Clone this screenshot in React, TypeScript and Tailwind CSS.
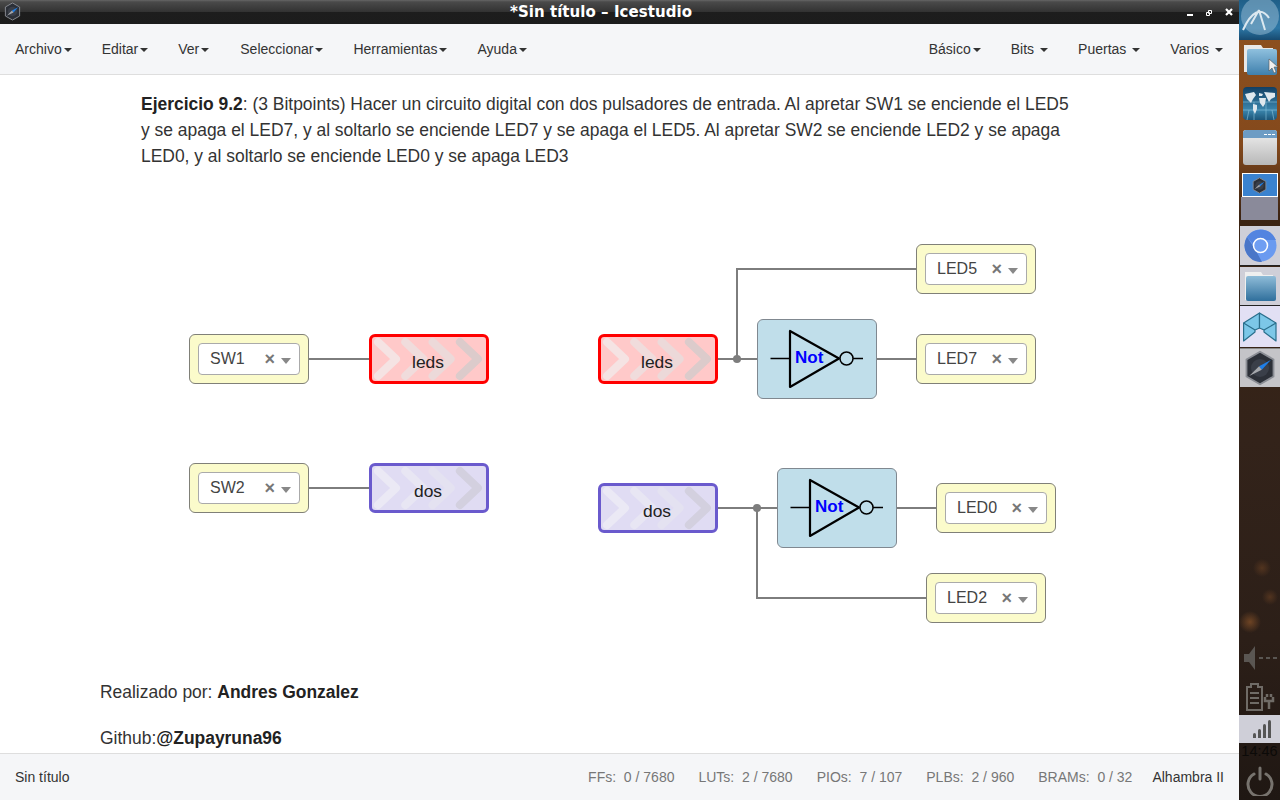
const menuLeft = [
  { label: "Archivo", cls: "ml-[15px]" },
  { label: "Editar", cls: "ml-[30px]" },
  { label: "Ver", cls: "ml-[30px]" },
  { label: "Seleccionar", cls: "ml-[31px]" },
  { label: "Herramientas", cls: "ml-[30px]" },
  { label: "Ayuda", cls: "ml-[30px]" },
];

const stats = [
  { label: "FFs:", value: "0 / 7680" },
  { label: "LUTs:", value: "2 / 7680" },
  { label: "PIOs:", value: "7 / 107" },
  { label: "PLBs:", value: "2 / 960" },
  { label: "BRAMs:", value: "0 / 32" },
];

const Caret = ({ className = "ml-[2px]" }: { className?: string }) => (
  <span className={`inline-block w-0 h-0 border-x-[4px] border-x-transparent border-t-[4px] border-t-[#333] align-middle ${className}`} />
);

const IceLogo = ({ size }: { size: number }) => (
  <svg width={size} height={size} viewBox="0 0 40 40">
    <path d="M20 2 35 10.500 35 29.500 20 38 5 29.500 5 10.500Z" fill="#2c3038" stroke="#8a8d94" strokeWidth="2" />
    <circle cx="20" cy="20" r="10" fill="#3a3f49" />
    <path d="M32 11 19 18 22 22Z" fill="#1f7fe8" />
    <path d="M8 29 19 18 22 22Z" fill="#a5a8ad" />
  </svg>
);

const PinBlock = ({ name, className }: { name: string; className: string }) => (
  <div className={`absolute w-[120px] h-[50px] flex items-center justify-center bg-[#fbfbcb] border border-[#808078] rounded-[6px] ${className}`}>
    <div className="w-[102px] h-[32px] flex items-center bg-white border border-[#aaa] rounded-[4px] pl-[11px] text-[16px] text-[#444]">
      <span className="flex-1">{name}</span>
      <span className="text-[18px] leading-none font-bold text-[#777] mr-[6px]">×</span>
      <span className="w-0 h-0 mr-[8px] mt-[3px] border-x-[5px] border-x-transparent border-t-[6px] border-t-[#888]" />
    </div>
  </div>
);

const TagBlock = ({ name, kind, className }: { name: string; kind: "red" | "purple"; className: string }) => {
  const red = kind === "red";
  const chevrons = red
    ? ["#f5e3e3", "#f0dcdc", "#ecd9d9", "#dccbcb"]
    : ["#ebe9f5", "#e8e6f3", "#e4e2f1", "#d3d0df"];
  return (
    <div className={`absolute w-[120px] h-[50px] rounded-[6px] border-[3px] overflow-hidden ${red ? "bg-[#ffc9c9] border-[#ff0000]" : "bg-[#e0dcf3] border-[#6a5acd]"} ${className}`}>
      <svg className="absolute -left-[3px] -top-[3px]" width="120" height="50" viewBox="0 0 120 50" fill="none">
        {chevrons.map((c, i) => (
          <path key={i} d={`M${9 + i * 27.300} 8 L${27 + i * 27.300} 25 L${9 + i * 27.300} 42`} stroke={c} strokeWidth="8" strokeLinecap="round" strokeLinejoin="round" />
        ))}
      </svg>
      <div className="relative h-full flex items-center justify-center pt-[7px] pr-[2px] text-[17.400px] text-[#222]">{name}</div>
    </div>
  );
};

const NotBlock = ({ className }: { className: string }) => (
  <div className={`absolute w-[120px] h-[80px] bg-[#c0deea] border border-[#808890] rounded-[6px] ${className}`}>
    <svg className="absolute left-0 top-0" width="118" height="78" viewBox="0 0 118 78" fill="none">
      <path d="M12.500 38.500H32M95 38.500H105" stroke="#000" strokeWidth="1.500" />
      <path d="M32 11V67L81 38.500Z" stroke="#000" strokeWidth="2.200" strokeLinejoin="round" />
      <circle cx="88.500" cy="38.500" r="6.500" stroke="#000" strokeWidth="1.500" fill="#c0deea" />
    </svg>
    <span className="absolute left-[37px] top-[28px] text-[17px] leading-[20px] font-bold text-[#0000ff] font-['Liberation_Sans',sans-serif]">Not</span>
  </div>
);

const Wires = () => (
  <svg className="absolute left-0 top-0" width="1239" height="680" fill="none">
    <g stroke="#7d7d7d" strokeWidth="2" transform="translate(0,-75)">
      <path d="M308 359H370M308 488H370" />
      <path d="M717 359H758M737 359V269H917M877 359H917" />
      <path d="M717 508H778M757 508V598H927M897 508H937" />
    </g>
    <g fill="#7d7d7d" transform="translate(0,-75)">
      <circle cx="737" cy="359" r="4" />
      <circle cx="757" cy="508" r="4" />
    </g>
  </svg>
);

const Dock = () => (
  <aside className="w-[41px] h-full flex flex-col items-center bg-[radial-gradient(circle_at_11px_622px,#6e4424_0,transparent_11px),radial-gradient(circle_at_23px_568px,#52341f_0,transparent_9px),radial-gradient(circle_at_31px_597px,#52341f_0,transparent_8px),linear-gradient(180deg,#8f5220_0%,#84491c_18%,#3c2413_27%,#33231a_55%,#2c1f18_80%,#1f1713_100%)] overflow-hidden">
    <div className="w-full h-[40px] bg-[linear-gradient(180deg,#1f5f88,#2d77a6_70%,#174a70)] flex justify-center">
      <svg width="41" height="40" viewBox="0 0 41 40" fill="none">
        <circle cx="21" cy="16" r="19" fill="#8fb6cf" opacity="0.55" />
        <path d="M4 30C12 12 22 6 30 18M20 10 26 30M20 10 12 24" stroke="#dbe8f0" strokeWidth="2" />
      </svg>
    </div>
    <svg className="mt-[2px]" width="38" height="34" viewBox="0 0 38 34" fill="none">
      <defs>
        <linearGradient id="folderTop" x1="0" y1="0" x2="0" y2="1">
          <stop offset="0" stopColor="#8fc0de" />
          <stop offset="1" stopColor="#3f80ad" />
        </linearGradient>
      </defs>
      <path d="M3 3H20L22 6H32V30H3Z" fill="#e8e8e8" />
      <rect x="6" y="7" width="30" height="26" rx="2" fill="url(#folderTop)" />
      <path d="M28 17V29L31 26 33 31 35 30 33 25H37Z" fill="#f0f0f0" stroke="#555" strokeWidth="0.600" />
    </svg>
    <svg className="mt-[10px]" width="36" height="35" viewBox="0 0 36 35" fill="none">
      <defs>
        <linearGradient id="mapSea" x1="0" y1="0" x2="0" y2="1">
          <stop offset="0" stopColor="#123f63" />
          <stop offset="0.700" stopColor="#3b86ad" />
          <stop offset="1" stopColor="#1c5578" />
        </linearGradient>
      </defs>
      <rect x="1" y="1" width="34" height="33" rx="4" fill="url(#mapSea)" />
      <path d="M1 24H35M1 16H35M12 16V34M24 16V34M7 24 5 34M30 24 32 34" stroke="#8cc4dc" strokeWidth="0.600" />
      <path d="M3 8 12 6 14 9 11 13 9 17 5 13ZM11 18 15 19 15 23 13 28 11 24ZM17 7 21 8 20 10 17 10ZM17 12H24L23 18 21 21 18 17ZM22 6 33 7 33 11 29 13 27 16 24 10Z" fill="#dfe8ee" />
    </svg>
    <div className="mt-[9px] w-[34px] h-[35px] rounded-[3px] bg-[linear-gradient(180deg,#f0f0f0,#b8b8b8)] overflow-hidden">
      <div className="h-[8px] bg-[#6d9cc4] flex justify-end items-center gap-px pr-[2px]">
        <span className="w-[3px] h-px bg-white" />
        <span className="w-[3px] h-px bg-white" />
        <span className="w-[3px] h-px bg-white" />
      </div>
    </div>
    <div className="mt-[8px] w-[36px] h-[24px] bg-[#3a82cf] border border-white flex items-center justify-center">
      <IceLogo size={17} />
    </div>
    <div className="w-[37px] h-[23px] bg-[#8a8a9a]" />
    <div className="mt-[6px] w-[40px] ml-[1px] h-[40px] bg-[#cfcfd8] border-b border-[#222] flex items-center justify-center">
      <svg width="33" height="33" viewBox="0 0 33 33">
        <circle cx="16.500" cy="16.500" r="16" fill="#6a9af0" />
        <path d="M3 8 11 20 18 33 A16.500 16.500 0 0 1 3 8Z" fill="#4a76c8" />
        <path d="M32 11H16.500L9 15 3 8 A16.500 16.500 0 0 1 32 11Z" fill="#5384e0" />
        <circle cx="16.500" cy="16.500" r="7" fill="#6f9ef2" stroke="#fff" strokeWidth="1.500" />
      </svg>
    </div>
    <div className="mt-px w-[40px] ml-[1px] h-[39px] bg-[#cfcfd8] border-b border-[#222] flex items-center justify-center">
      <svg width="34" height="32" viewBox="0 0 34 32" fill="none">
        <defs>
          <linearGradient id="folderDock" x1="0" y1="0" x2="0" y2="1">
            <stop offset="0" stopColor="#8fbcd8" />
            <stop offset="1" stopColor="#2f6f9c" />
          </linearGradient>
        </defs>
        <path d="M2 2H18L20 5H30V30H2Z" fill="#efefef" />
        <rect x="3" y="6" width="30" height="25" rx="2" fill="url(#folderDock)" />
      </svg>
    </div>
    <div className="w-[40px] ml-[1px] h-[41px] bg-[#e2e0f4] flex items-center justify-center">
      <svg width="34" height="30" viewBox="0 0 34 30" fill="#7cc7e8" stroke="#2a6f8c" strokeWidth="1.200" strokeLinejoin="round">
        <path d="M16.500 1 0.600 11 0.600 29 12 20V18L16.500 16Z" />
        <path d="M16.500 1 33 11 33 29 21 20V18L16.500 16Z" />
        <path d="M0.600 11 12 18M33 11 21 18" />
      </svg>
    </div>
    <div className="mt-px w-[40px] ml-[1px] h-[39px] bg-[#c4c4c8] border-t border-[#888] flex items-center justify-center">
      <IceLogo size={36} />
    </div>
    <div className="flex-1" />
    <svg className="mb-[9px]" width="38" height="26" viewBox="0 0 38 26" fill="#5a5652">
      <path d="M3 9H8L14 1V25L8 17H3Z" />
      <path d="M18 12h4v2h-4zM25 12h4v2h-4zM32 12h4v2h-4z" />
    </svg>
    <svg className="mb-[4px]" width="32" height="31" viewBox="0 0 32 31" fill="none" stroke="#6f6b66" strokeWidth="2">
      <path d="M7 4H14V7H18V30H3V7H7Z" />
      <path d="M6 13H15M6 18H15M6 23H15" />
      <path d="M21 17V21H29V17M25 21V29M23 14V17M27 14V17" strokeWidth="2.500" />
    </svg>
    <div className="w-full h-[28px] bg-[#cfcfd8] flex items-end justify-center gap-[2px] pb-[5px] pl-[4px]">
      <span className="w-[3px] h-[5px] rounded-t-sm bg-[#555]" />
      <span className="w-[3px] h-[9px] rounded-t-sm bg-[#555]" />
      <span className="w-[3px] h-[14px] rounded-t-sm bg-[#555]" />
      <span className="w-[3px] h-[18px] rounded-t-sm bg-[#555]" />
    </div>
    <div className="w-full h-[15px] pt-px text-center text-[14.500px] leading-[15px] text-[#0c0a08] whitespace-nowrap font-['Liberation_Sans',sans-serif]">14:46</div>
    <svg className="mt-[7px] mb-[4px]" width="30" height="31" viewBox="0 0 30 31" fill="none" stroke="#77736e" strokeWidth="3" strokeLinecap="round">
      <path d="M9 9A12 12 0 1 0 21 9" />
      <path d="M15 3V14" />
    </svg>
  </aside>
);

export default function App() {
  return (
    <div className="w-[1280px] h-[800px] flex overflow-hidden bg-white font-['Liberation_Sans',sans-serif]">
      <div className="w-[1239px] h-full flex flex-col">
        {/* title bar */}
        <header className="relative h-[24px] flex items-center justify-center pr-[37px] bg-[linear-gradient(180deg,#666_0%,#4a4a4a_8%,#333_48%,#1d1d1d_50%,#1c1c1c_100%)]">
          <div className="absolute left-[3px] top-[2px]"><IceLogo size={19} /></div>
          <span className="text-[15px] font-bold text-white tracking-[0.050px] font-['DejaVu_Sans',sans-serif]">*Sin título – Icestudio</span>
          <svg className="absolute right-[6px] top-[8px]" width="46" height="9" viewBox="0 0 46 9" fill="none" stroke="#fff">
            <path d="M0 7H6" strokeWidth="2" />
            <path d="M21.500 2.500H24.500V5.500H21.500ZM19.500 4.500H22.500V7.500H19.500Z" strokeWidth="1" />
            <path d="M39 1 45 7M45 1 39 7" strokeWidth="2.200" />
          </svg>
        </header>

        {/* menu bar */}
        <nav className="h-[51px] flex items-center bg-[#f5f6f8] border-b border-[#dedede] text-[14px] text-[#333]">
          {menuLeft.map((m) => (
            <span key={m.label} className={m.cls}>{m.label}<Caret /></span>
          ))}
          <span className="ml-auto">Básico<Caret /></span>
          <span className="ml-[30px]">Bits<Caret className="ml-[6px]" /></span>
          <span className="ml-[30px]">Puertas<Caret className="ml-[6px]" /></span>
          <span className="ml-[30px] mr-[16px]">Varios<Caret className="ml-[6px]" /></span>
        </nav>

        {/* canvas */}
        <main className="relative flex-1 overflow-hidden bg-white">
          <Wires />
          <p className="absolute left-[141px] top-[16px] w-[960px] text-[17.440px] leading-[26px] text-[#333]">
            <b className="text-[#222]">Ejercicio 9.2</b>: (3 Bitpoints) Hacer un circuito digital con dos pulsadores de entrada. Al apretar SW1 se enciende el LED5<br />
            y se apaga el LED7, y al soltarlo se enciende LED7 y se apaga el LED5. Al apretar SW2 se enciende LED2 y se apaga<br />
            LED0, y al soltarlo se enciende LED0 y se apaga LED3
          </p>

          <PinBlock name="SW1" className="left-[189px] top-[259px]" />
          <TagBlock name="leds" kind="red" className="left-[369px] top-[259px]" />
          <PinBlock name="SW2" className="left-[189px] top-[388px]" />
          <TagBlock name="dos" kind="purple" className="left-[369px] top-[388px]" />

          <TagBlock name="leds" kind="red" className="left-[598px] top-[259px]" />
          <NotBlock className="left-[757px] top-[244px]" />
          <PinBlock name="LED5" className="left-[916px] top-[169px]" />
          <PinBlock name="LED7" className="left-[916px] top-[259px]" />

          <TagBlock name="dos" kind="purple" className="left-[598px] top-[408px]" />
          <NotBlock className="left-[777px] top-[393px]" />
          <PinBlock name="LED0" className="left-[936px] top-[408px]" />
          <PinBlock name="LED2" className="left-[926px] top-[498px]" />

          <p className="absolute left-[100px] top-[606px] text-[17.440px] leading-[22px] text-[#333]">Realizado por: <b className="text-[#222]">Andres Gonzalez</b></p>
          <p className="absolute left-[100px] top-[652px] text-[17.440px] leading-[22px] text-[#333]">Github:<b className="text-[#222]">@Zupayruna96</b></p>
        </main>

        {/* status bar */}
        <footer className="h-[47px] flex items-center bg-[#f5f6f8] border-t border-[#dedede] pl-[15px] pr-[15px] text-[14px] text-[#333]">
          <span>Sin título</span>
          <div className="ml-auto flex items-center gap-[24px] text-[#777]">
            {stats.map((s) => (
              <span key={s.label} className="whitespace-pre">{s.label}  {s.value}</span>
            ))}
          </div>
          <span className="ml-[20px]">Alhambra II</span>
        </footer>
      </div>
      <Dock />
    </div>
  );
}
